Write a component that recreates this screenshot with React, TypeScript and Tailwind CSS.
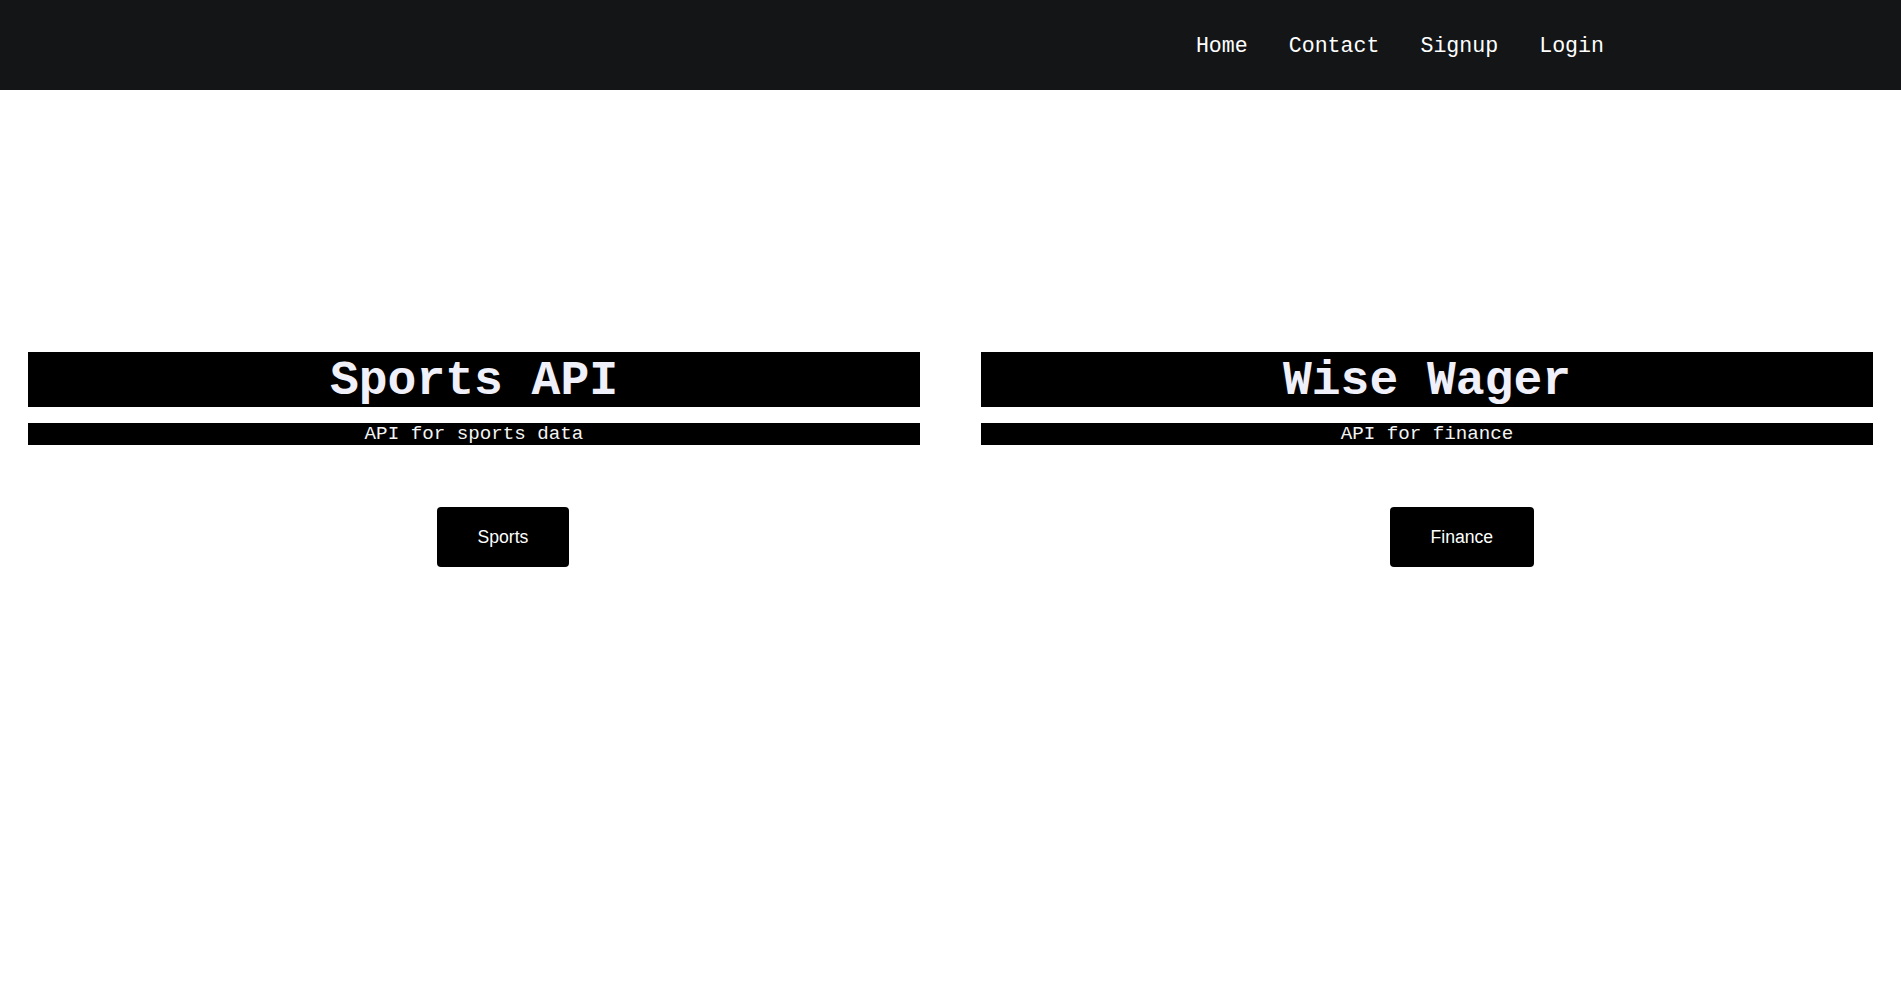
import React from "react";

const mono = { fontFamily: '"Liberation Mono", "Courier New", monospace' };

function Card({ title, subtitle, button }: { title: string; subtitle: string; button: string }) {
  return (
    <div className="flex flex-col">
      <h1
        className="bg-black pt-[3px] text-center font-bold text-[48px] leading-[52px] text-[#f0f0fa]"
        style={mono}
      >
        {title}
      </h1>
      <p
        className="mt-[16px] bg-black pt-[1px] text-center text-[19.2px] leading-[21px] text-[#f4f4f4]"
        style={mono}
      >
        {subtitle}
      </p>
      <div className="mt-[62px] pl-[409px]">
        <button
          className="rounded-[4px] bg-black px-[40.5px] py-5 text-[17.6px] leading-[20px] text-white"
          style={{ fontFamily: '"Liberation Sans", Arial, sans-serif' }}
        >
          {button}
        </button>
      </div>
    </div>
  );
}

export default function App() {
  return (
    <div className="min-h-[1000px] bg-white">
      <nav className="flex h-[90px] items-center justify-end gap-[41px] bg-[#141517] pr-[297px] pt-[2px]">
        {["Home", "Contact", "Signup", "Login"].map((l) => (
          <a key={l} href="#" className="text-[21.6px] leading-[26px] text-white" style={mono}>
            {l}
          </a>
        ))}
      </nav>
      <main className="mt-[262px] grid grid-cols-2 gap-[61px] px-[28px]">
        <Card title="Sports API" subtitle="API for sports data" button="Sports" />
        <Card title="Wise Wager" subtitle="API for finance" button="Finance" />
      </main>
    </div>
  );
}
